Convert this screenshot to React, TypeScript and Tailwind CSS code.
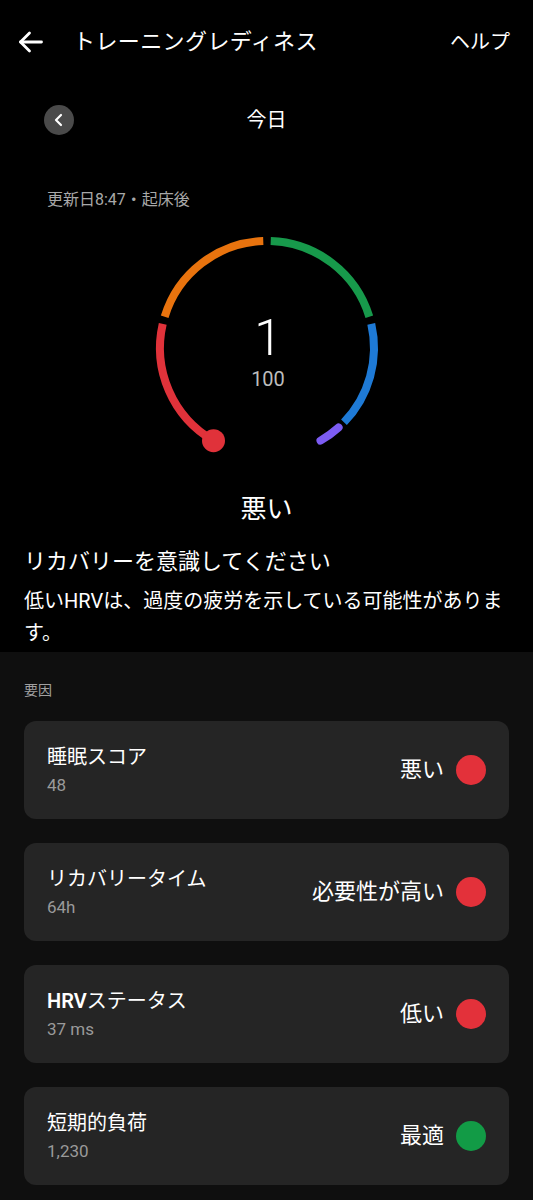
const font = "font-['Roboto','Noto_Sans_CJK_JP',sans-serif]";

const CX = 120;
const CY = 124;
const R = 107;

const pt = (deg: number) => {
  const a = (deg * Math.PI) / 180;
  return [CX + R * Math.sin(a), CY - R * Math.cos(a)];
};

const arc = (from: number, to: number) => {
  const [x1, y1] = pt(from);
  const [x2, y2] = pt(to);
  const large = to - from > 180 ? 1 : 0;
  return `M ${x1.toFixed(2)} ${y1.toFixed(2)} A ${R} ${R} 0 ${large} 1 ${x2.toFixed(2)} ${y2.toFixed(2)}`;
};

const segments = [
  { from: -150, to: -77, color: "#E0323A", cap: "butt" },
  { from: -73, to: -2, color: "#E8730E", cap: "butt" },
  { from: 2, to: 73, color: "#17994B", cap: "butt" },
  { from: 77, to: 134, color: "#1E7AD6", cap: "butt" },
  { from: 138, to: 150, color: "#7C5CF3", cap: "round" },
] as const;

const Gauge = () => {
  const [dx, dy] = pt(-150);
  return (
    <svg width="240" height="232" viewBox="0 0 240 232" className="mx-auto mt-[12px] block">
      {segments.map((s) => (
        <path
          key={s.from}
          d={arc(s.from, s.to)}
          fill="none"
          stroke={s.color}
          strokeWidth={8}
          strokeLinecap={s.cap}
        />
      ))}
      <circle cx={dx} cy={dy} r={11.5} fill="#E0323A" />
      <text
        x={CX + 1}
        y={114}
        textAnchor="middle"
        dominantBaseline="central"
        fill="#ffffff"
        fontSize={50}
        fontWeight={300}
        fontFamily="Roboto, sans-serif"
      >
        1
      </text>
      <text
        x={CX + 1}
        y={155}
        textAnchor="middle"
        dominantBaseline="central"
        fill="#bdbdbd"
        fontSize={20}
        fontFamily="Roboto, sans-serif"
      >
        100
      </text>
    </svg>
  );
};

const factors = [
  { title: "睡眠スコア", value: "48", status: "悪い", dot: "bg-[#E3313A]" },
  { title: "リカバリータイム", value: "64h", status: "必要性が高い", dot: "bg-[#E3313A]" },
  { title: "HRVステータス", value: "37 ms", status: "低い", dot: "bg-[#E3313A]", bold: true },
  { title: "短期的負荷", value: "1,230", status: "最適", dot: "bg-[#129B46]" },
];

export default function App() {
  return (
    <div className={`w-[533px] min-h-[1200px] bg-[#0f0f0f] text-white ${font}`}>
      <div className="bg-black">
        {/* ヘッダー */}
        <header className="flex h-[84px] items-center pl-[18px] pr-[23px]">
          <svg width="25" height="22" viewBox="0 0 25 22" fill="none" stroke="#fff" strokeWidth="2.8" strokeLinecap="round" strokeLinejoin="round">
            <path d="M23.5 11H2.5" />
            <path d="M11.5 2L2.5 11L11.5 20" />
          </svg>
          <h1 className="ml-[30px] text-[22px] leading-[30px] tracking-[0.4px]">トレーニングレディネス</h1>
          <span className="ml-auto text-[20px] leading-[28px]">ヘルプ</span>
        </header>

        {/* 日付 */}
        <div className="mt-[16px] grid h-[40px] grid-cols-[1fr_auto_1fr] items-center px-[44px]">
          <button className="flex h-[30px] w-[30px] items-center justify-center rounded-full bg-[#4a4a4a]">
            <svg width="12" height="14" viewBox="0 0 12 14" fill="none" stroke="#fff" strokeWidth="2.2" strokeLinecap="round" strokeLinejoin="round">
              <path d="M8 2L3 7L8 12" />
            </svg>
          </button>
          <span className="text-[20px] leading-[28px]">今日</span>
          <span />
        </div>

        <p className="mt-[48px] px-[47px] text-[16px] leading-[24px] text-[#a8a8a8]">更新日8:47・起床後</p>

        <Gauge />

        <p className="mt-[35px] text-center text-[26px] leading-[36px]">悪い</p>

        <div className="px-[24px] pb-[3px]">
          <p className="mt-[20px] text-[22px] leading-[30px]">リカバリーを意識してください</p>
          <p className="mt-[8px] text-[20px] leading-[32px]">低いHRVは、過度の疲労を示している可能性があります。</p>
        </div>
      </div>

      {/* 要因 */}
      <section className="px-[24px] pt-[28px] pb-[16px]">
        <h2 className="text-[14px] leading-[20px] text-[#a0a0a0]">要因</h2>
        <div className="mt-[21px] flex flex-col gap-[24px]">
          {factors.map((f) => (
            <div key={f.title} className="flex h-[98px] items-center rounded-[12px] bg-[#252525] pl-[23px] pr-[23px]">
              <div className="flex flex-col">
                <span className="text-[20px] leading-[28px]">
                  {f.bold ? (
                    <>
                      <span className="font-semibold">HRV</span>ステータス
                    </>
                  ) : (
                    f.title
                  )}
                </span>
                <span className="mt-[2px] text-[17px] leading-[24px] text-[#9a9a9a]">{f.value}</span>
              </div>
              <span className="ml-auto text-[22px] leading-[30px]">{f.status}</span>
              <span className={`ml-[12px] h-[30px] w-[30px] rounded-full ${f.dot}`} />
            </div>
          ))}
        </div>
      </section>
    </div>
  );
}
